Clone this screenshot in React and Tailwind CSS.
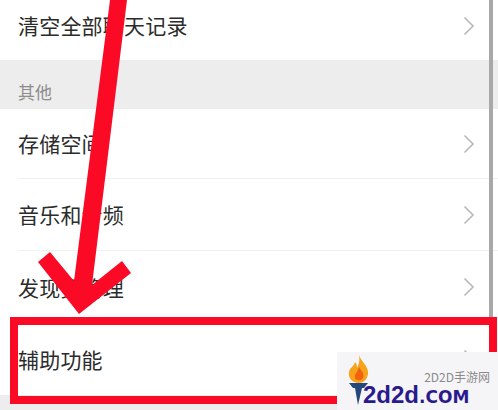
const CJK = 'font-["Noto_Sans_CJK_SC","Noto_Sans",sans-serif]';

const Chevron = () => (
  <svg width="12" height="20" viewBox="0 0 12 20" fill="none" className="shrink-0">
    <path d="M1.5 1.5 L10 10 L1.5 18.5" stroke="#b8b8b8" strokeWidth="1.6" />
  </svg>
);

const Row = ({ label, rowClass }) => (
  <div className="pl-[18px] bg-white">
    <div className={`flex items-center justify-between pr-[23px] ${rowClass}`}>
      <span className="text-[21px] leading-none tracking-[0.2px] text-[#2b2b2b]">{label}</span>
      <Chevron />
    </div>
  </div>
);

const Torch = () => (
  <svg width="22" height="50" viewBox="0 0 22 50" className="shrink-0">
    <path d="M11 0 C13 7 21 11 20 19 C19 25 15 28 11 28 C5 28 0 24 1 17 C2 12 6 12 7 7 C9 9 9 11 9 13 C11 9 12 5 11 0Z" fill="#f7a21b" />
    <path d="M11 12 C13 16 17 18 15 23 C14 26 8 26 7 23 C6 19 10 17 11 12Z" fill="#f0620f" />
    <path d="M1 28 H20 L16 33 H14 L10 50 L7 33 H5Z" fill="#24477c" />
  </svg>
);

export default function App() {
  return (
    <div className={`relative w-[498px] h-[410px] overflow-hidden bg-[#ededed] ${CJK}`}>
      <Row label="清空全部聊天记录" rowClass="h-[60px] pb-[9px]" />
      <div className="h-[49px] flex items-center pl-[18px] pt-[14px] bg-[#ededed]">
        <span className="text-[17px] leading-none text-[#8c8c8c]">其他</span>
      </div>
      <Row label="存储空间" rowClass="h-[70px] border-b border-[#f1f1f1]" />
      <Row label="音乐和音频" rowClass="h-[72px] border-b border-[#f1f1f1]" />
      <Row label="发现页管理" rowClass="h-[72px]" />
      <Row label="辅助功能" rowClass="h-[72px]" />

      {/* scrollbar line */}
      <div className="absolute left-[489px] top-0 w-[4px] h-[320px] bg-[#a8a8a8]" />

      {/* red highlight box */}
      <div className="absolute left-[10px] top-[317px] w-[487px] h-[87px] border-8 border-[#fb0a26]" />

      {/* red arrow */}
      <svg className="absolute left-0 top-0" width="498" height="410" viewBox="0 0 498 410">
        <polygon
          points="110,0 127,0 92,285 122,261 131,273 79,314 38,262 50,252 74,281"
          fill="#fb0a26"
        />
      </svg>

      {/* watermark */}
      <div className="absolute left-[337px] top-[352px] w-[161px] h-[58px] bg-[#f5f5f7] flex items-start pl-[11px] pt-[3px]">
        <Torch />
        <div className="flex flex-col items-end pt-[16px] ml-[-7px] w-[108px]">
          <div className="text-[12px] leading-none text-[#8a8a8a] whitespace-nowrap mr-[-19px]">2D2D手游网</div>
          <div className="self-start flex items-baseline whitespace-nowrap text-[#2a1a8c] font-bold leading-none">
            <span className="font-['Liberation_Sans',sans-serif] text-[24px]">2d2d</span>
            <span className="font-['DejaVu_Sans',sans-serif] text-[17px]">.COM</span>
          </div>
        </div>
      </div>
    </div>
  );
}
